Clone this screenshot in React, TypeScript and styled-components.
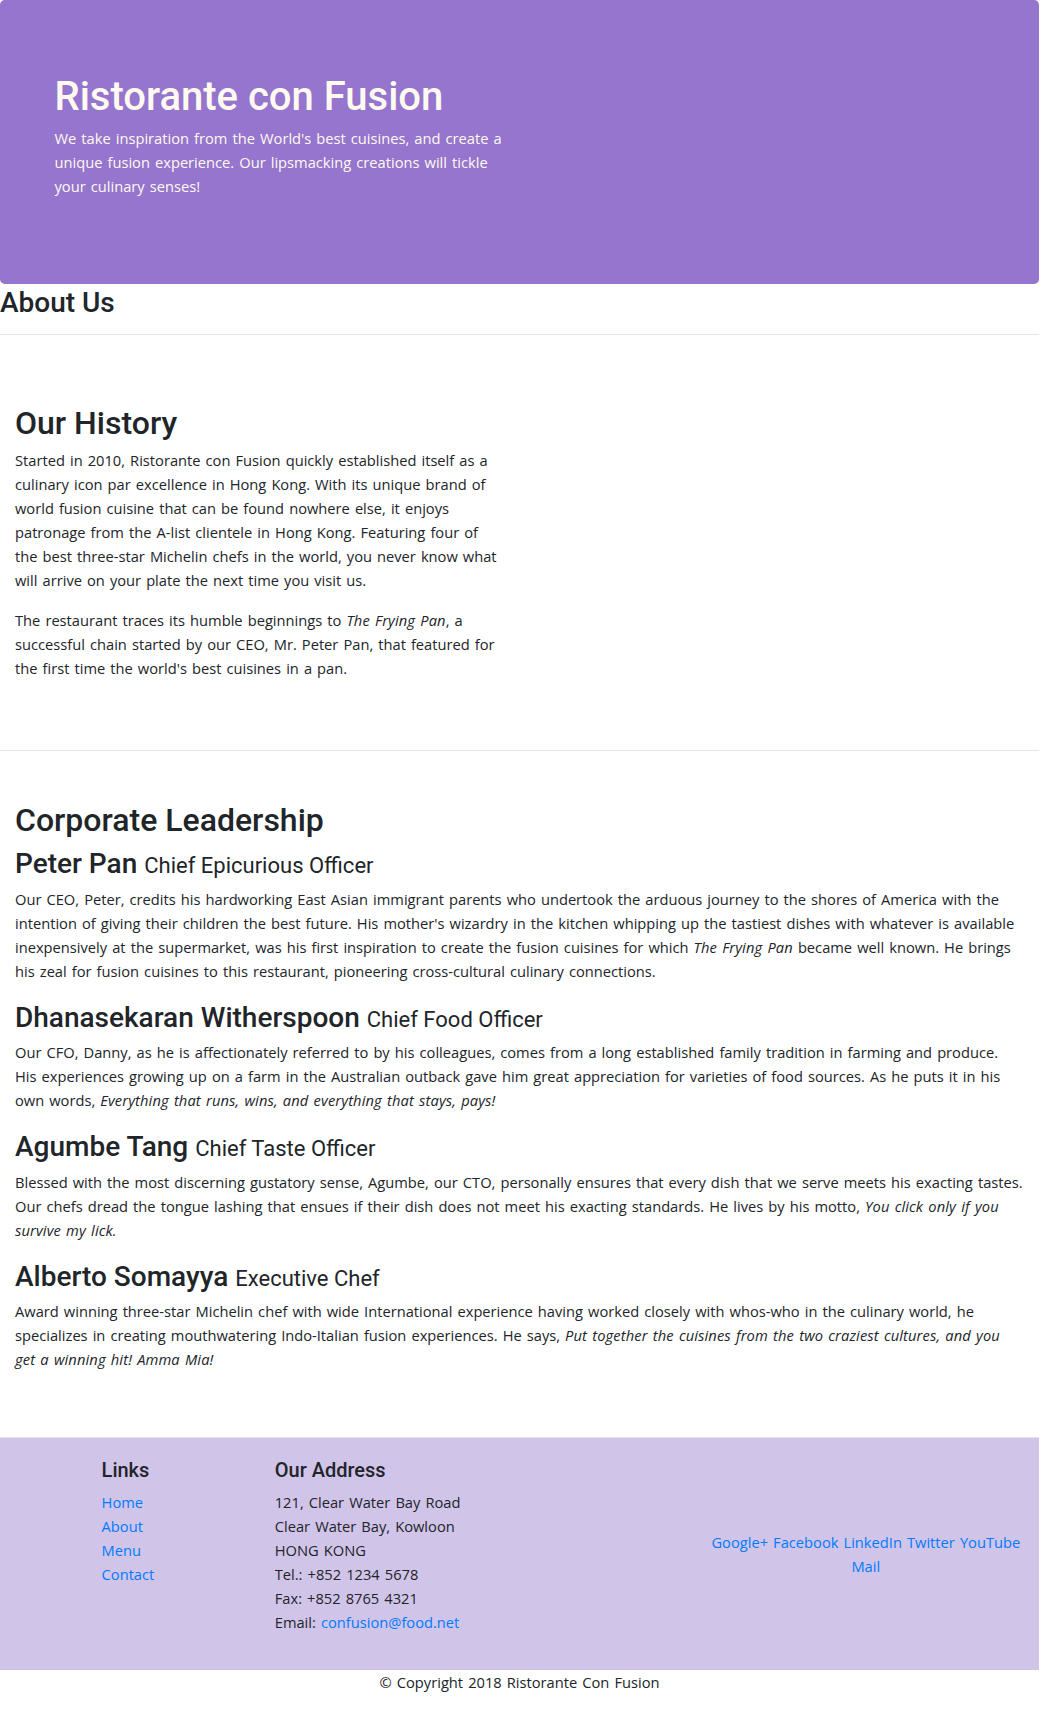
import React from "react";
import styled, { createGlobalStyle } from "styled-components";

const GlobalStyle = createGlobalStyle`
  *, *::before, *::after { box-sizing: border-box; }
  html, body { margin: 0; padding: 0; background: #ffffff; }
  body {
    font-family: "Open Sans", "Noto Sans", sans-serif;
    font-size: 14.68px;
    line-height: 24px;
    word-spacing: 1.25px;
    color: #212529;
  }
  em { letter-spacing: 0.12px; }
`;

const Page = styled.div`
  width: 1039px;
`;

/* ---------- Jumbotron ---------- */
const Jumbotron = styled.header`
  padding: 70px 30px;
  background: #9575cd;
  color: floralwhite;
  border-radius: 4.8px;
`;

const Container = styled.div`
  max-width: 960px;
  margin: 0 auto;
  padding: 0 15px;
`;

const Row = styled.div`
  display: flex;
  flex-wrap: wrap;
  margin: 0 -15px;
`;

const Col = styled.div<{ $span?: number }>`
  flex: 0 0 ${(p) => ((p.$span ?? 12) / 12) * 100}%;
  max-width: ${(p) => ((p.$span ?? 12) / 12) * 100}%;
  padding: 0 15px;
`;

const headingFont = `
  font-family: Roboto, "Liberation Sans", sans-serif;
  font-weight: 500;
  line-height: 1.2;
  word-spacing: normal;
`;

const Title = styled.h1`
  ${headingFont}
  font-size: 40px;
  padding-top: 3px;
  margin: 0 0 5px;
`;

const Text = styled.p`
  margin: 0 0 16px;
`;

/* ---------- Page header ---------- */
const PageHeader = styled.div`
  display: flow-root;
`;

const PageTitle = styled.h3`
  ${headingFont}
  font-size: 28px;
  padding-top: 2px;
  margin: 0 0 6px;
`;

const Rule = styled.hr`
  border: 0;
  border-top: 1px solid rgba(0, 0, 0, 0.1);
  margin: 14px 0 16px;
`;

/* ---------- Main ---------- */
const Main = styled.main`
  padding: 0 15px;
`;

const SectionRow = styled(Row)<{ $top: number }>`
  min-height: 400px;
  padding: ${(p) => p.$top}px 0 50px;
  border-bottom: 1px solid rgba(0, 0, 0, 0.1);
`;

const SectionHeading = styled.h2`
  ${headingFont}
  font-size: 32px;
  padding-top: 2px;
  margin: 0 0 6px;
`;

const PersonName = styled.h3`
  ${headingFont}
  font-size: 28px;
  padding-top: 2px;
  margin: 0 0 6px;
`;

const Role = styled.small`
  font-size: 22px;
  font-weight: 400;
`;

/* ---------- Footer ---------- */
const Footer = styled.footer`
  background: #d1c4e9;
  padding: 20px 0;
`;

const FooterRow = styled.div`
  display: flex;
`;

const FooterCol = styled.div<{ $span: number; $offset?: number; $center?: boolean }>`
  flex: 0 0 ${(p) => (p.$span / 12) * 100}%;
  max-width: ${(p) => (p.$span / 12) * 100}%;
  margin-left: ${(p) => ((p.$offset ?? 0) / 12) * 100}%;
  padding: 0 ${(p) => (p.$center ? 10 : 15)}px;
  align-self: ${(p) => (p.$center ? "center" : "auto")};
  text-align: ${(p) => (p.$center ? "center" : "left")};
`;

const FooterHeading = styled.h5`
  ${headingFont}
  font-size: 20px;
  margin: 0 0 8px;
`;

const LinkList = styled.ul`
  list-style: none;
  margin: 0 0 16px;
  padding: 0;
`;

const Link = styled.a`
  color: #007bff;
  text-decoration: none;
`;

const Address = styled.address`
  font-style: normal;
  margin: 0 0 16px;
`;

const Copyright = styled.p`
  margin: 0 0 16px;
  text-align: center;
`;

const leaders = [
  {
    name: "Peter Pan",
    role: "Chief Epicurious Officer",
    body: (
      <>
        Our CEO, Peter, credits his hardworking East Asian immigrant parents who undertook the arduous
        journey to the shores of America with the intention of giving their children the best future. His
        mother's wizardry in the kitchen whipping up the tastiest dishes with whatever is available
        inexpensively at the supermarket, was his first inspiration to create the fusion cuisines for which{" "}
        <em>The Frying Pan</em> became well known. He brings his zeal for fusion cuisines to this
        restaurant, pioneering cross-cultural culinary connections.
      </>
    ),
  },
  {
    name: "Dhanasekaran Witherspoon",
    role: "Chief Food Officer",
    body: (
      <>
        Our CFO, Danny, as he is affectionately referred to by his colleagues, comes from a long established
        family tradition in farming and produce. His experiences growing up on a farm in the Australian
        outback gave him great appreciation for varieties of food sources. As he puts it in his own words,{" "}
        <em>Everything that runs, wins, and everything that stays, pays!</em>
      </>
    ),
  },
  {
    name: "Agumbe Tang",
    role: "Chief Taste Officer",
    body: (
      <>
        Blessed with the most discerning gustatory sense, Agumbe, our CTO, personally ensures that every
        dish that we serve meets his exacting tastes. Our chefs dread the tongue lashing that ensues if their
        dish does not meet his exacting standards. He lives by his motto, <em>You click only if you survive
        my lick.</em>
      </>
    ),
  },
  {
    name: "Alberto Somayya",
    role: "Executive Chef",
    body: (
      <>
        Award winning three-star Michelin chef with wide International experience having worked closely
        with whos-who in the culinary world, he specializes in creating mouthwatering Indo-Italian fusion
        experiences. He says,{" "}
        <em>Put together the cuisines from the two craziest cultures, and you get a winning hit! Amma Mia!</em>
      </>
    ),
  },
];

const socials = ["Google+", "Facebook", "LinkedIn", "Twitter", "YouTube", "Mail"];

export default function App() {
  return (
    <Page>
      <GlobalStyle />
      <Jumbotron>
        <Container>
          <Row>
            <Col $span={6}>
              <Title>Ristorante con Fusion</Title>
              <Text>
                We take inspiration from the World's best cuisines, and create a unique fusion experience. Our
                lipsmacking creations will tickle your culinary senses!
              </Text>
            </Col>
          </Row>
        </Container>
      </Jumbotron>

      <PageHeader>
        <PageTitle>About Us</PageTitle>
        <Rule />
      </PageHeader>

      <Main>
        <SectionRow $top={51}>
          <Col $span={6}>
            <SectionHeading>Our History</SectionHeading>
            <Text>
              Started in 2010, Ristorante con Fusion quickly established itself as a culinary icon par
              excellence in Hong Kong. With its unique brand of world fusion cuisine that can be found nowhere
              else, it enjoys patronage from the A-list clientele in Hong Kong. Featuring four of the best
              three-star Michelin chefs in the world, you never know what will arrive on your plate the next
              time you visit us.
            </Text>
            <Text>
              The restaurant traces its humble beginnings to <em>The Frying Pan</em>, a successful chain
              started by our CEO, Mr. Peter Pan, that featured for the first time the world's best cuisines in
              a pan.
            </Text>
          </Col>
        </SectionRow>

        <SectionRow $top={48}>
          <Col>
            <SectionHeading>Corporate Leadership</SectionHeading>
            {leaders.map((l) => (
              <React.Fragment key={l.name}>
                <PersonName>
                  {l.name} <Role>{l.role}</Role>
                </PersonName>
                <Text>{l.body}</Text>
              </React.Fragment>
            ))}
          </Col>
        </SectionRow>
      </Main>

      <Footer>
        <FooterRow>
          <FooterCol $span={2} $offset={1}>
            <FooterHeading>Links</FooterHeading>
            <LinkList>
              <li><Link href="#">Home</Link></li>
              <li><Link href="#">About</Link></li>
              <li><Link href="#">Menu</Link></li>
              <li><Link href="#">Contact</Link></li>
            </LinkList>
          </FooterCol>
          <FooterCol $span={5}>
            <FooterHeading>Our Address</FooterHeading>
            <Address>
              121, Clear Water Bay Road<br />
              Clear Water Bay, Kowloon<br />
              HONG KONG<br />
              Tel.: +852 1234 5678<br />
              Fax: +852 8765 4321<br />
              Email: <Link href="#">confusion@food.net</Link>
            </Address>
          </FooterCol>
          <FooterCol $span={4} $center>
            {socials.map((s, i) => (
              <React.Fragment key={s}>
                <Link href="#">{s}</Link>
                {i < socials.length - 1 ? " " : ""}
              </React.Fragment>
            ))}
          </FooterCol>
        </FooterRow>
      </Footer>
      <Copyright>© Copyright 2018 Ristorante Con Fusion</Copyright>
    </Page>
  );
}
